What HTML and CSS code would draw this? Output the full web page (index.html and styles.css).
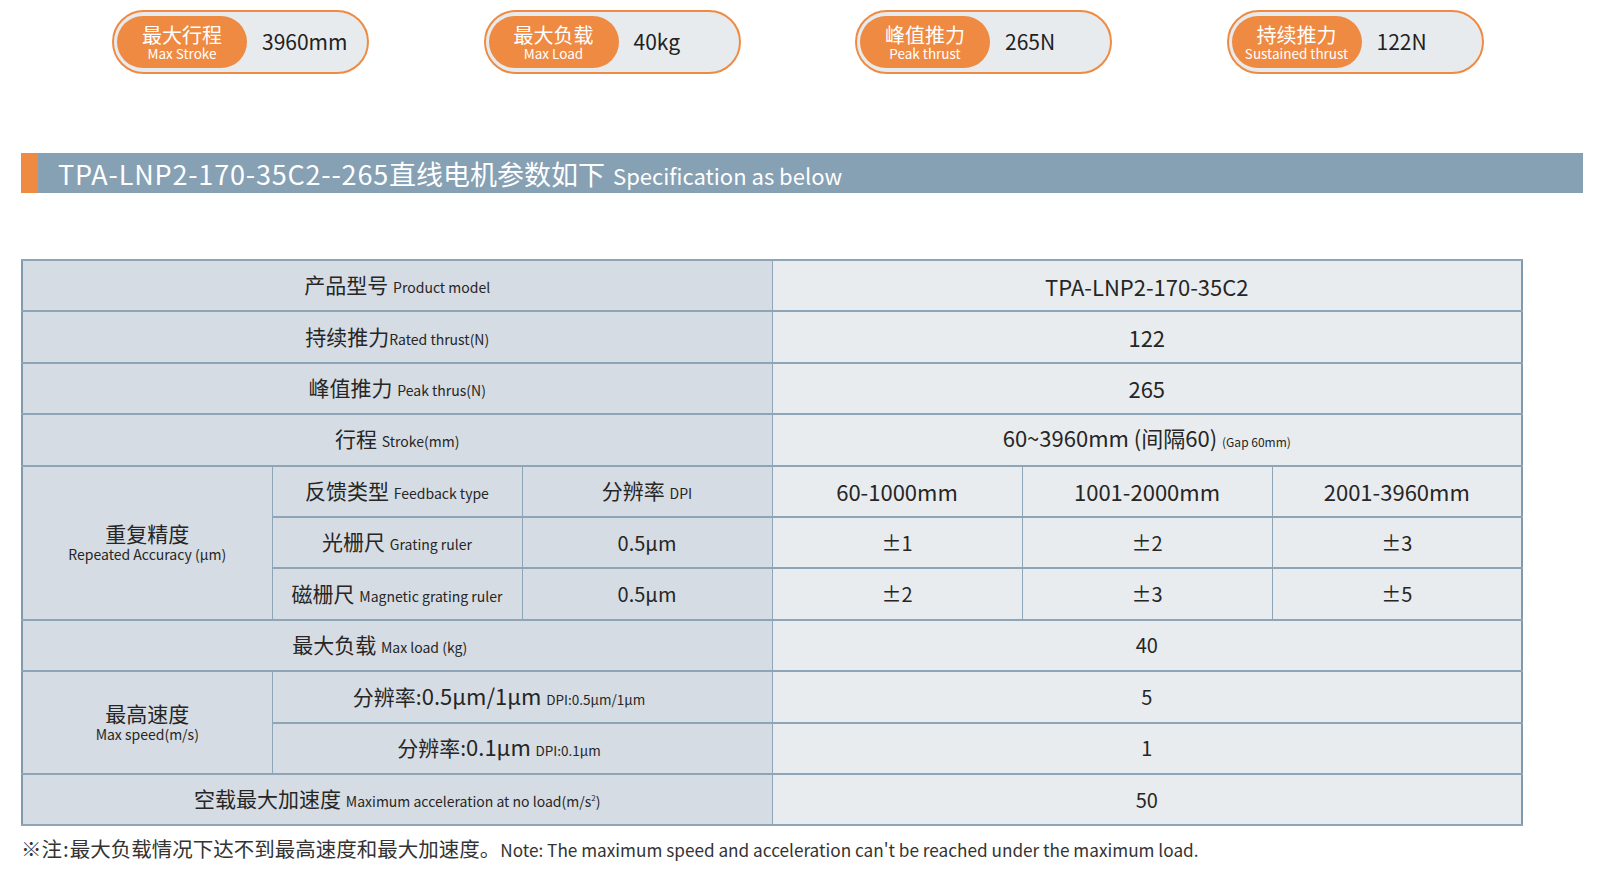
FILE: index.html
```html
<!DOCTYPE html>
<html lang="zh-CN">
<head>
<meta charset="utf-8">
<title>TPA-LNP2-170-35C2 Specification</title>
<link rel="stylesheet" href="styles.css">
</head>
<body>
<div class="page">
  <div class="stats">
    <div class="pill"><div class="tag"><span class="zh">最大行程</span><span class="en">Max Stroke</span></div><span class="val">3960mm</span></div>
    <div class="pill"><div class="tag"><span class="zh">最大负载</span><span class="en">Max Load</span></div><span class="val">40kg</span></div>
    <div class="pill"><div class="tag"><span class="zh">峰值推力</span><span class="en">Peak thrust</span></div><span class="val">265N</span></div>
    <div class="pill"><div class="tag"><span class="zh">持续推力</span><span class="en">Sustained thrust</span></div><span class="val">122N</span></div>
  </div>

  <div class="title-bar">
    <span class="mark"></span>
    <h2 class="title"><span class="model">TPA-LNP2-170-35C2--265</span>直线电机参数如下 <small>Specification as below</small></h2>
  </div>

  <div class="table-wrap">
    <table class="spec">
      <colgroup><col><col><col><col><col><col></colgroup>
      <tbody>
        <tr><td class="k" colspan="3">产品型号 <small>Product model</small></td><td class="v lg" colspan="3">TPA-LNP2-170-35C2</td></tr>
        <tr><td class="k" colspan="3">持续推力<small>Rated thrust(N)</small></td><td class="v lg" colspan="3">122</td></tr>
        <tr><td class="k" colspan="3">峰值推力 <small>Peak thrus(N)</small></td><td class="v lg" colspan="3">265</td></tr>
        <tr><td class="k" colspan="3">行程 <small>Stroke(mm)</small></td><td class="v lg" colspan="3">60~3960mm (间隔60) <small class="xs">(Gap 60mm)</small></td></tr>
        <tr>
          <td class="k stack" rowspan="3"><span class="zh">重复精度</span><span class="en">Repeated Accuracy (μm)</span></td>
          <td class="k">反馈类型 <small>Feedback type</small></td>
          <td class="k">分辨率 <small>DPI</small></td>
          <td class="v lg">60-1000mm</td><td class="v lg">1001-2000mm</td><td class="v lg">2001-3960mm</td>
        </tr>
        <tr><td class="k">光栅尺 <small>Grating ruler</small></td><td class="k num">0.5μm</td><td class="v">±1</td><td class="v">±2</td><td class="v">±3</td></tr>
        <tr><td class="k">磁栅尺 <small>Magnetic grating ruler</small></td><td class="k num">0.5μm</td><td class="v">±2</td><td class="v">±3</td><td class="v">±5</td></tr>
        <tr><td class="k shift-a" colspan="3">最大负载 <small>Max load (kg)</small></td><td class="v" colspan="3">40</td></tr>
        <tr>
          <td class="k stack" rowspan="2"><span class="zh">最高速度</span><span class="en">Max speed(m/s)</span></td>
          <td class="k shift-b" colspan="2">分辨率:<span class="lat">0.5μm/1μm</span> <small class="sm">DPI:0.5μm/1μm</small></td>
          <td class="v" colspan="3">5</td>
        </tr>
        <tr><td class="k shift-b" colspan="2">分辨率:<span class="lat">0.1μm</span> <small class="sm">DPI:0.1μm</small></td><td class="v" colspan="3">1</td></tr>
        <tr><td class="k" colspan="3">空载最大加速度 <small>Maximum acceleration at no load(m/s<sup>2</sup>)</small></td><td class="v" colspan="3">50</td></tr>
      </tbody>
    </table>
  </div>

  <p class="note">※注<span class="colon">:</span>最大负载情况下达不到最高速度和最大加速度。<span class="note-en">Note: The maximum speed and acceleration can't be reached under the maximum load.</span></p>
</div>
</body>
</html>
```

FILE: styles.css
```css
* { box-sizing: border-box; }

body {
  margin: 0;
  background: #ffffff;
  font-family: "Noto Sans CJK SC", "Noto Sans", sans-serif;
  color: #262626;
}

.page { padding-top: 10px; }

/* stat pills */
.stats {
  display: flex;
  gap: 114.5px;
  padding-left: 112px;
}

.pill {
  width: 257px;
  height: 64px;
  border: 2px solid #ef8a42;
  border-radius: 32px;
  background: #e8ebee;
  padding: 4px 3px;
  display: flex;
  align-items: center;
}

.tag {
  width: 130px;
  height: 100%;
  border-radius: 27px;
  background: #ef8a42;
  color: #ffffff;
  display: flex;
  flex-direction: column;
  align-items: center;
  justify-content: center;
  padding-top: 1px;
}

.tag .zh { font-size: 20px; line-height: 21px; }
.tag .en { font-size: 13.5px; line-height: 17px; }

.val {
  margin-left: 15px;
  padding-bottom: 3px;
  font-size: 21px;
  color: #222222;
}

/* title bar */
.title-bar {
  margin: 79px 17px 0 21px;
  height: 40px;
  background: #86a0b4;
  display: flex;
  align-items: center;
}

.mark {
  width: 17px;
  align-self: stretch;
  background: #ef8a42;
}

.title {
  margin: 0 0 0 20px;
  font-size: 27px;
  font-weight: 400;
  line-height: 1;
  color: #ffffff;
  white-space: nowrap;
}

.title .model { letter-spacing: 0.8px; }
.title small { font-size: 22px; margin-left: 2px; }

/* spec table */
.table-wrap {
  margin-top: 66px;
  padding-left: 21px;
}

.spec {
  width: 1502px;
  table-layout: fixed;
  border-collapse: collapse;
  border: 2px solid #7f9aae;
}

.spec col { width: 250px; }

.spec tr { height: 51.4px; }

.spec td {
  padding: 0;
  border-style: solid;
  border-color: #8ea5b8;
  border-width: 2px 1px;
  text-align: center;
  vertical-align: middle;
  font-size: 21px;
  line-height: 24px;
  white-space: nowrap;
}

.spec td.k { background: #d6dce3; }
.spec td.v { background: #e9ecef; font-size: 20px; }
.spec td.v.lg { font-size: 22px; }
.spec td.num { font-size: 20px; }

.spec td.shift-a { padding-right: 35px; }
.spec td.shift-b { padding-right: 46px; }

.spec .lat { font-size: 22px; }

.spec small { font-size: 14px; }
.spec small.sm { font-size: 13.5px; }
.spec small.xs { font-size: 12px; }
.spec sup { font-size: 8px; vertical-align: 6px; }

.spec td.stack .zh,
.spec td.stack .en { display: block; }
.spec td.stack .zh { font-size: 21px; line-height: 24px; }
.spec td.stack .en { font-size: 14px; line-height: 19px; }

.note {
  margin: 9px 0 0 21px;
  font-size: 20.5px;
  line-height: 26px;
  color: #333333;
  white-space: nowrap;
}

.note .colon { margin: 0 1px; }
.note-en { font-size: 17.2px; }
```
